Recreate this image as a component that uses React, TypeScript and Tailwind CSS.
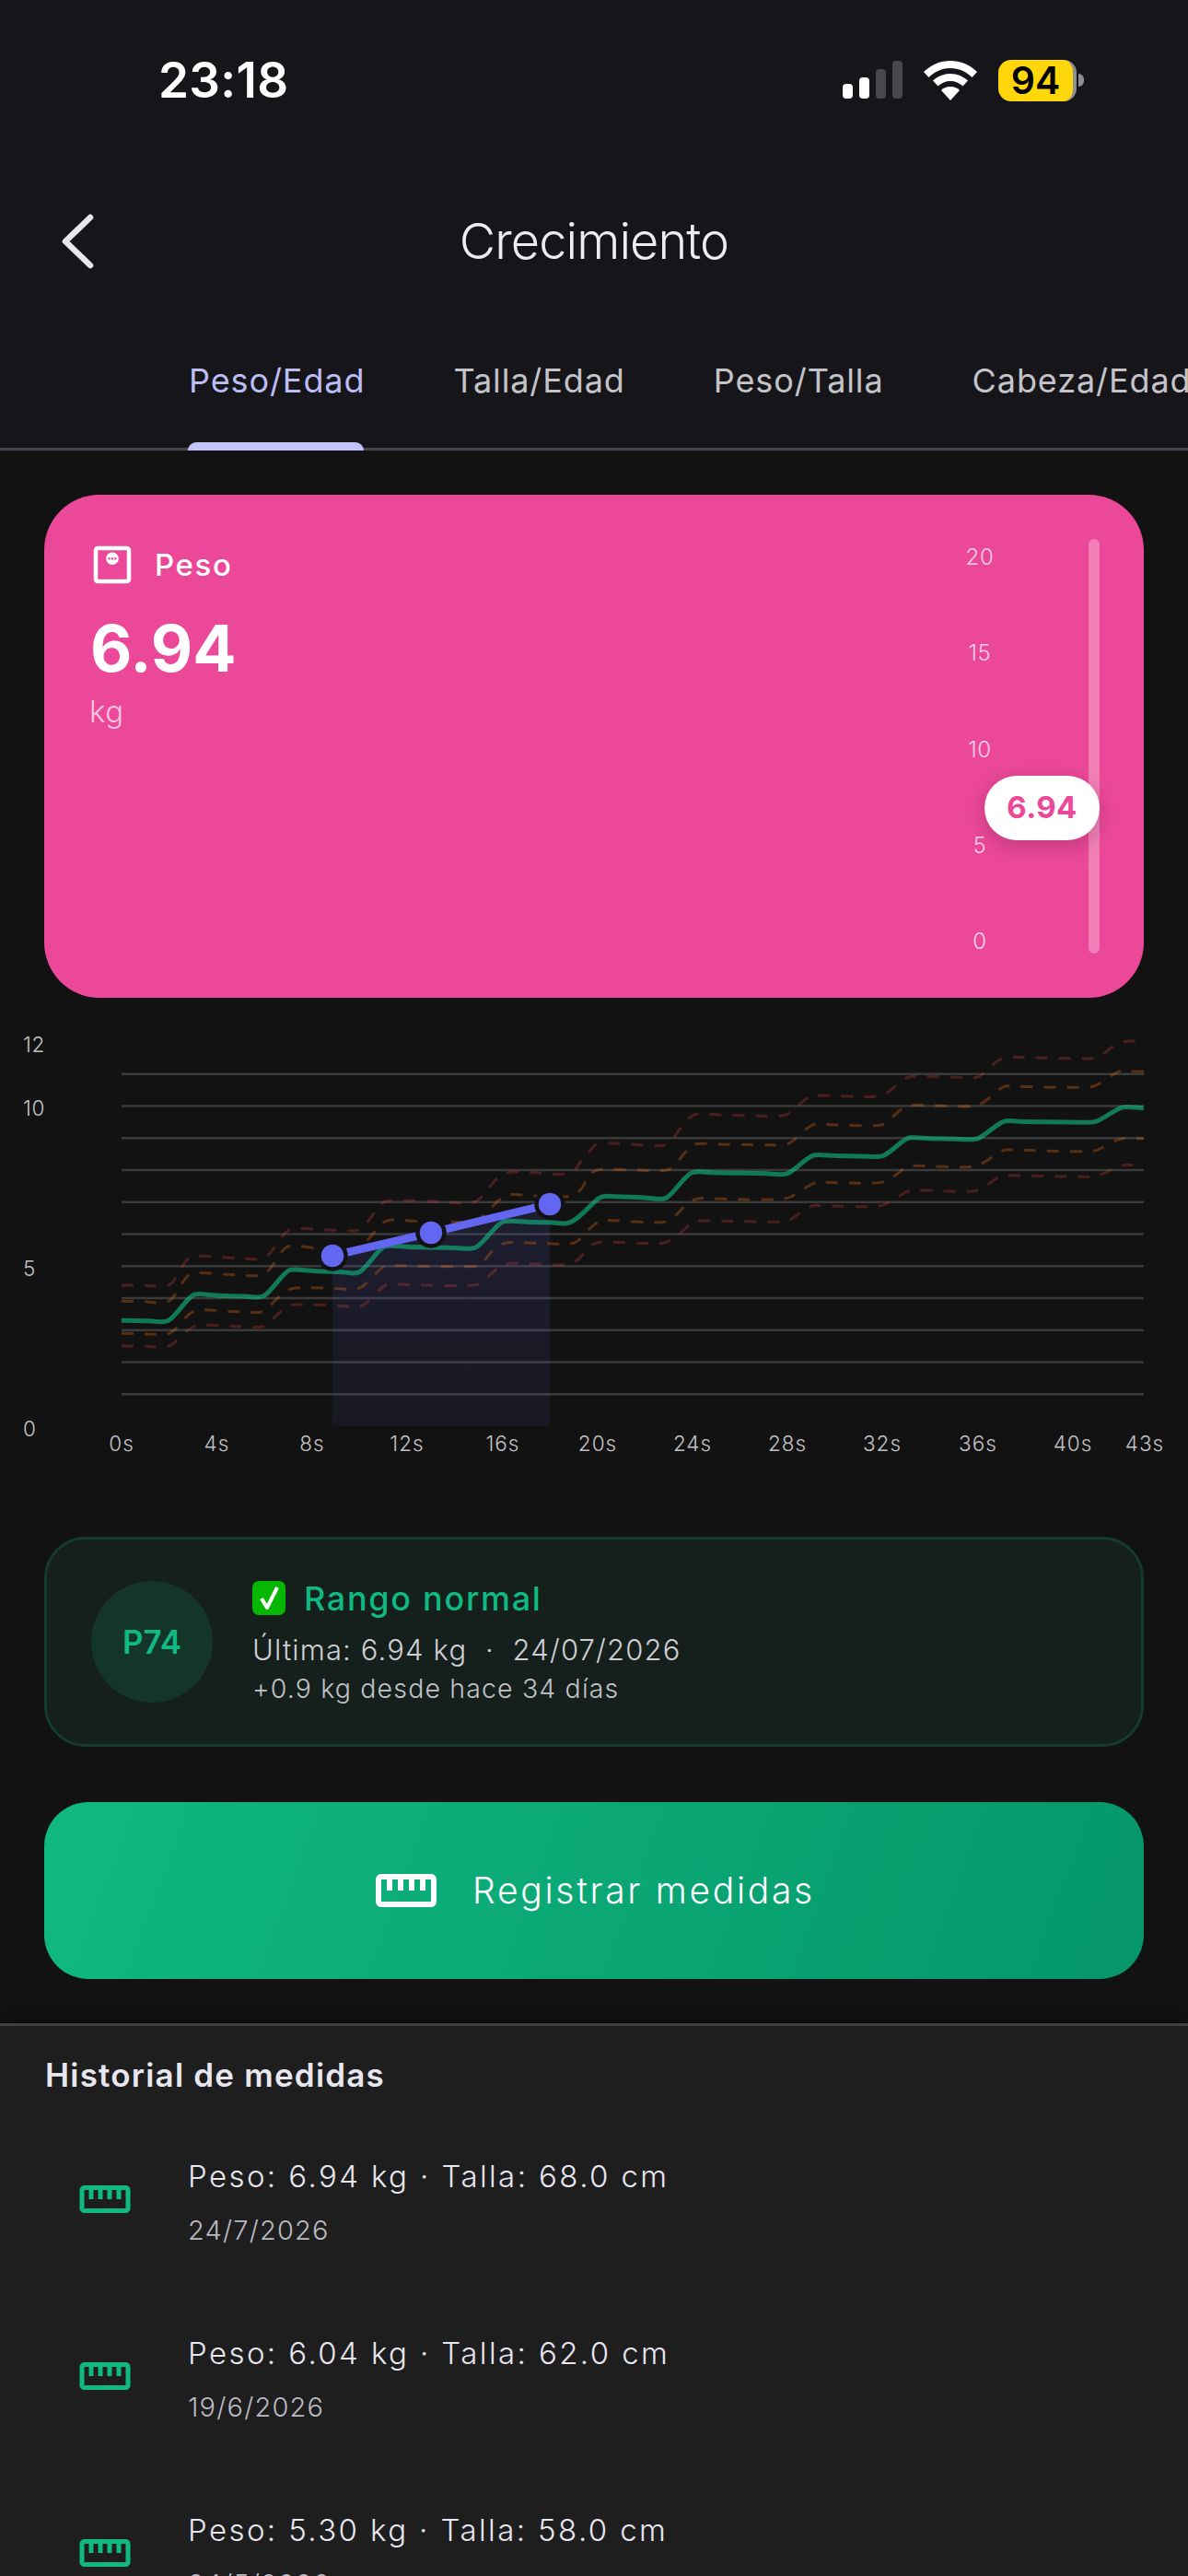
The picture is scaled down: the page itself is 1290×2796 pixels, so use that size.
import React from "react";
import { MdStraighten, MdOutlineMonitorWeight } from "react-icons/md";

type P = [number, number];
const conv = (a: number[], b: number[]): P[] => {
  const out: P[] = [];
  for (let i = 0; i < a.length; i += 2) if (a[i] < 1540) out.push([a[i] / 2.4123, 1100 + a[i + 1] / 3]);
  for (let i = 0; i < b.length; i += 2) out.push([640 + b[i] / 2.4123, 1100 + b[i + 1] / 3]);
  return out;
};
const smooth = (p: P[]) => {
  let d = `M${p[0][0]} ${p[0][1]}`;
  for (let i = 1; i < p.length - 1; i++) {
    const mx = (p[i][0] + p[i + 1][0]) / 2;
    const my = (p[i][1] + p[i + 1][1]) / 2;
    d += ` Q${p[i][0]} ${p[i][1]} ${mx} ${my}`;
  }
  const l = p[p.length - 1];
  return d + ` L${l[0]} ${l[1]}`;
};

const green = conv(
  [318,1000,380,1000,430,1006,450,995,500,918,520,912,570,920,640,920,680,926,700,915,750,838,770,832,830,840,900,842,935,848,955,830,1000,760,1020,755,1080,762,1180,762,1240,768,1260,750,1310,680,1330,674,1400,680,1450,680,1485,686,1510,670],
  [0,630,30,594,60,596,150,600,190,606,210,596,260,520,285,514,330,520,450,520,510,526,530,515,580,462,600,460,650,464,710,464,760,468,780,458,830,406,850,403,900,408,960,408,1010,412,1030,400,1080,352,1100,349,1140,353,1260,353,1320,356,1340,345,1390,306,1410,304,1452,308]
);
const red1 = conv(
  [318,885,375,885,405,888,437,888,455,875,490,795,515,788,600,795,660,800,690,800,710,780,742,715,770,698,830,703,910,708,940,708,960,685,1000,615,1025,607,1140,612,1220,620,1255,612,1300,535,1335,513,1420,520,1475,525,1505,518,1530,460],
  [0,450,15,425,40,421,120,427,180,433,210,425,260,335,290,324,350,332,430,332,490,337,525,328,570,272,590,266,680,270,760,273,790,250,830,206,860,204,970,208,1010,212,1030,200,1070,150,1100,141,1190,145,1300,148,1335,145,1380,97,1410,89,1452,92]
);
const org1 = conv(
  [318,937,375,937,405,942,437,942,455,925,490,850,515,843,600,850,660,855,690,852,710,830,745,760,770,755,830,765,870,775,930,770,960,745,1000,680,1030,670,1100,678,1170,678,1250,680,1280,640,1320,592,1350,588,1400,595,1490,600,1520,580],
  [0,525,10,515,30,506,60,508,130,510,200,514,220,500,265,430,285,422,340,427,440,427,510,430,530,420,580,362,600,360,660,364,760,367,780,355,825,300,860,297,1000,305,1030,295,1080,240,1095,235,1150,239,1300,242,1330,235,1380,190,1400,186,1452,190]
);
const org2 = conv(
  [318,1042,375,1042,405,1046,437,1046,460,1030,495,975,525,963,600,970,670,975,695,970,720,935,750,900,780,892,870,895,935,900,960,880,1000,825,1020,820,1100,823,1240,825,1260,820,1290,770,1320,746,1350,745,1440,750,1500,752,1520,735],
  [0,700,30,672,60,674,180,682,215,675,260,612,290,600,350,605,510,607,540,590,590,548,610,550,720,553,760,553,790,540,830,497,860,495,1000,503,1030,490,1080,445,1100,443,1200,448,1320,450,1340,440,1385,408,1410,406,1452,408]
);
const red2 = conv(
  [318,1083,375,1083,405,1086,437,1086,455,1075,500,1020,530,1013,600,1018,680,1023,700,1015,730,975,760,948,790,948,870,950,940,957,960,945,1000,890,1020,880,1100,885,1240,888,1265,875,1310,820,1340,812,1410,816,1480,820,1510,810],
  [0,760,20,743,60,745,180,750,205,745,235,720,270,678,290,674,380,677,510,680,530,670,580,625,600,625,750,632,790,615,830,578,860,575,1000,582,1030,570,1075,528,1100,527,1300,533,1335,530,1385,497,1410,492,1452,497]
);

const gridYs = [0, 1, 2, 3, 4, 5, 6, 7, 8, 9, 10].map((i) => 1165.7 + i * 34.75);
const xLabels: [string, number][] = [["0s",132],["4s",235.5],["8s",339],["12s",442],["16s",546],["20s",649],["24s",752],["28s",855],["32s",958],["36s",1062],["40s",1165],["43s",1243]];
const yLabels: [string, number][] = [["12",1134],["10",1203],["5",1377],["0",1551]];

function Chart() {
  return (
    <svg viewBox="0 1083 1290 585" className="block w-[1290px] h-[585px]" fontFamily="Inter, sans-serif">
      <defs>
        <linearGradient id="area" x1="0" y1="0" x2="0" y2="1">
          <stop offset="0" stopColor="#6366f1" stopOpacity="0.14" />
          <stop offset="1" stopColor="#6366f1" stopOpacity="0.07" />
        </linearGradient>
      </defs>
      {gridYs.map((y) => (
        <line key={y} x1="132" x2="1242" y1={y} y2={y} stroke="#3a3a3a" strokeWidth="2.5" />
      ))}
      {yLabels.map(([t, y]) => (
        <text key={t} x="25" y={y + 8} fontSize="22.5" fontWeight="300" fill="#c2c2c6" letterSpacing="0.6">{t}</text>
      ))}
      {xLabels.map(([t, x]) => (
        <text key={t} x={x} y={1575} fontSize="22.5" fontWeight="300" fill="#c2c2c6" textAnchor="middle" letterSpacing="1">{t}</text>
      ))}
      <path d="M361 1363 L468 1338 L597 1307 L597 1548 L361 1548 Z" fill="url(#area)" />
      <path d={smooth(red1)} fill="none" stroke="#ef4444" strokeOpacity="0.26" strokeWidth="3" strokeDasharray="13 12" />
      <path d={smooth(red2)} fill="none" stroke="#ef4444" strokeOpacity="0.26" strokeWidth="3" strokeDasharray="13 12" />
      <path d={smooth(org1)} fill="none" stroke="#f97316" strokeOpacity="0.3" strokeWidth="3" strokeDasharray="13 12" />
      <path d={smooth(org2)} fill="none" stroke="#f97316" strokeOpacity="0.3" strokeWidth="3" strokeDasharray="13 12" />
      <path d={smooth(green)} fill="none" stroke="#10b981" strokeOpacity="0.62" strokeWidth="5" strokeLinejoin="round" />
      <polyline points="361,1363 468,1338 597,1307" fill="none" stroke="#6366f1" strokeWidth="8.5" />
      {[[361, 1363], [468, 1338], [597, 1307]].map(([x, y]) => (
        <circle key={x} cx={x} cy={y} r="14.5" fill="#6366f1" stroke="#121212" strokeWidth="4.5" />
      ))}
    </svg>
  );
}

function StatusBar() {
  return (
    <div className="flex items-center justify-between h-[174px] pl-[172px] pr-[113px]">
      <span className="text-[53px] font-semibold leading-none tracking-[0.3px] text-white">23:18</span>
      <div className="flex items-center">
        <svg width="65" height="42" viewBox="0 0 65 42" className="block">
          <rect x="0" y="25" width="11" height="16" rx="4" fill="#fff" />
          <rect x="18" y="18" width="11" height="23" rx="4" fill="#fff" />
          <rect x="36" y="9" width="11" height="32" rx="4" fill="#48484c" />
          <rect x="54" y="0" width="11" height="41" rx="4" fill="#48484c" />
        </svg>
        <svg width="58" height="43" viewBox="0 0 58 43" className="block ml-[23px]">
          <path d="M29 0C18 0 8 4 0 12l5.500 6C12 11.500 20 8 29 8s17 3.500 23.500 10L58 12C50 4 40 0 29 0Z" fill="#fff" />
          <path d="M29 14c-7.500 0-14 3-19 7.500l5.500 6C19 24 24 22 29 22s10 2 13.500 5.500l5.500-6C43 17 36.500 14 29 14Z" fill="#fff" />
          <path d="M29 28c-4 0-7.500 1.500-10 4L29 43l10-11c-2.500-2.500-6-4-10-4Z" fill="#fff" />
        </svg>
        <div className="flex items-center ml-[23px]">
          <div className="w-[85px] h-[45px] rounded-[14px] bg-[#ffd60a] border-r-4 border-[#8e8e93] flex items-center justify-center text-black text-[41px] font-semibold leading-none">
            94
          </div>
          <div className="w-[6px] h-[14px] rounded-r-full bg-[#8e8e93] ml-[2px]" />
        </div>
      </div>
    </div>
  );
}

function Row({ a, b }: { a: string; b: string }) {
  return (
    <div className="flex items-center h-[192px] pl-[84px]">
      <MdStraighten className="text-[#10b981] shrink-0 mt-[-5px]" size={60} />
      <div className="ml-[60px] flex flex-col">
        <span className="text-[33px] font-light leading-[40px] tracking-[2.4px] text-[#e8e6ee] mt-[1px]">{a}</span>
        <span className="text-[29px] font-light leading-[34px] tracking-[1.2px] text-[#bcbac2] mt-[22px]">{b}</span>
      </div>
    </div>
  );
}

export default function App() {
  return (
    <div className="w-[1290px] h-[2796px] overflow-hidden bg-[#121212] font-[Inter,sans-serif]">
      <div className="h-[489px] bg-[#15151a] relative overflow-hidden">
        <StatusBar />
        <div className="flex items-center h-[176px] pl-[64px] relative">
          <svg width="40" height="60" viewBox="0 0 40 60" className="block">
            <path d="M34 4 L7 30 L34 56" fill="none" stroke="#e8e6ef" strokeWidth="6.500" strokeLinecap="round" strokeLinejoin="round" />
          </svg>
          <div className="absolute inset-0 flex items-center justify-center text-[54px] font-light tracking-[-0.9px] text-[#eeecf3] leading-none">Crecimiento</div>
        </div>
        <div className="flex pl-[205px] gap-[96px] mt-[41px] whitespace-nowrap">
          <span className="text-[36px] leading-[44px] tracking-[0.9px] text-[#bdbdf5]">Peso/Edad</span>
          <span className="text-[36px] leading-[44px] tracking-[0.9px] text-[#c4c4c8]">Talla/Edad</span>
          <span className="text-[36px] leading-[44px] tracking-[0.9px] text-[#c4c4c8]">Peso/Talla</span>
          <span className="text-[36px] leading-[44px] tracking-[0.9px] text-[#c4c4c8]">Cabeza/Edad</span>
        </div>
        <div className="absolute left-0 right-0 bottom-0 h-[3px] bg-[#46464f]" />
        <div className="absolute left-[204px] w-[191px] bottom-0 h-[9px] rounded-t-[9px] bg-[#c4c4fd]" />
      </div>

      <div className="pt-[48px] px-[48px]">
        <div className="h-[546px] rounded-[60px] bg-[#ec4899] relative flex justify-between pl-[50px] pr-[48px]">
          <div className="pt-[49px]">
            <div className="flex items-center">
              <MdOutlineMonitorWeight className="text-white -ml-[3px]" size={54} />
              <span className="ml-[19px] text-[33px] leading-[40px] font-medium tracking-[1.6px] text-white">Peso</span>
            </div>
            <div className="mt-[24px] text-[70px] leading-[80px] font-bold text-white">6.94</div>
            <div className="mt-[8px] -ml-[1px] text-[33px] font-light leading-[40px] tracking-[0.6px] text-white/70">kg</div>
          </div>
          <div className="flex gap-[98px] pt-[48px]">
            <div className="h-[452px] w-[40px] flex flex-col justify-between items-center pt-[5px] text-[24px] font-light leading-[30px] tracking-[0.6px] text-white/75">
              <span>20</span>
              <span>15</span>
              <span>10</span>
              <span>5</span>
              <span>0</span>
            </div>
            <div className="w-[12px] h-[450px] rounded-full bg-white/30" />
          </div>
          <div className="absolute left-[1021px] top-[305px] w-[125px] h-[70px] rounded-full bg-white shadow-[0_6px_24px_rgba(0,0,0,0.2)] flex items-center justify-center text-[#ec4899] text-[33px] font-bold tracking-[0.4px]">
            6.94
          </div>
        </div>
      </div>

      <Chart />

      <div className="px-[48px]">
        <div className="h-[228px] rounded-[45px] border-[3px] border-[#143b30] bg-[#151f1c] flex items-center pl-[48px]">
          <div className="w-[132px] h-[132px] rounded-full bg-[#14352a] flex items-center justify-center text-[35px] font-semibold text-[#10b981] shrink-0">P74</div>
          <div className="ml-[43px] flex flex-col">
            <div className="flex items-center">
              <svg width="36" height="37" viewBox="0 0 36 37" className="block">
                <rect width="36" height="37" rx="7" fill="#05b700" />
                <path d="M10 19 L16 29 L27 7" fill="none" stroke="#fff" strokeWidth="4" strokeLinejoin="round" />
              </svg>
              <span className="ml-[20px] text-[36px] leading-[44px] font-medium tracking-[1.7px] text-[#10b981]">Rango normal</span>
            </div>
            <span className="mt-[12px] text-[31px] font-light leading-[44px] tracking-[1.15px] text-[#cfcfd3] whitespace-pre">Última: 6.94 kg  ·  24/07/2026</span>
            <span className="mt-[1px] text-[28.5px] font-light leading-[38px] tracking-[1.15px] text-[#c2c2c6]">+0.9 kg desde hace 34 días</span>
          </div>
        </div>
        <div className="mt-[60px] h-[192px] rounded-[48px] bg-[linear-gradient(110deg,#10b981,#059669)] flex items-center justify-center">
          <MdStraighten className="text-white" size={72} />
          <span className="ml-[36px] text-[39px] font-light leading-[48px] tracking-[2.7px] text-white">Registrar medidas</span>
        </div>
      </div>

      <div className="mt-[48px] h-[700px] bg-[#1e1e1e] border-t-[3px] border-[#3f3f3f] shadow-[0_-8px_16px_rgba(0,0,0,0.3)]">
        <div className="pl-[49px] pt-[31px] text-[35px] leading-[44px] font-semibold tracking-[1.2px] text-[#e8e6ef]">Historial de medidas</div>
        <div className="mt-[19px]">
          <Row a="Peso: 6.94 kg · Talla: 68.0 cm" b="24/7/2026" />
          <Row a="Peso: 6.04 kg · Talla: 62.0 cm" b="19/6/2026" />
          <Row a="Peso: 5.30 kg · Talla: 58.0 cm" b="24/5/2026" />
        </div>
      </div>
    </div>
  );
}
